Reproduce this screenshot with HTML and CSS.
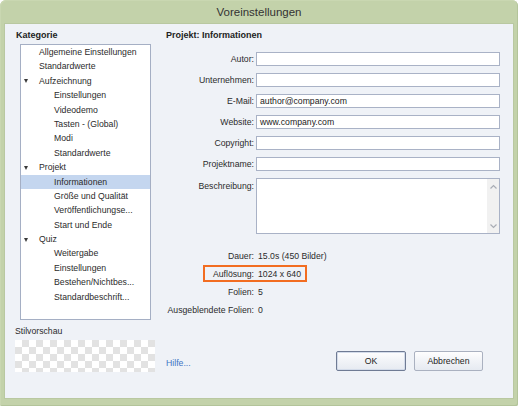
FILE: index.html
```html
<!DOCTYPE html>
<html lang="de">
<head>
<meta charset="utf-8">
<title>Voreinstellungen</title>
<link rel="stylesheet" href="styles.css">
</head>
<body>
<div class="window">
  <div class="titlebar">Voreinstellungen</div>
  <div class="client">
    <div class="left">
      <div class="heading">Kategorie</div>
      <ul class="tree">
        <li class="l1">Allgemeine Einstellungen</li>
        <li class="l1">Standardwerte</li>
        <li class="l1 open">Aufzeichnung</li>
        <li class="l2">Einstellungen</li>
        <li class="l2">Videodemo</li>
        <li class="l2">Tasten - (Global)</li>
        <li class="l2">Modi</li>
        <li class="l2">Standardwerte</li>
        <li class="l1 open">Projekt</li>
        <li class="l2 selected">Informationen</li>
        <li class="l2">Größe und Qualität</li>
        <li class="l2">Veröffentlichungse...</li>
        <li class="l2">Start und Ende</li>
        <li class="l1 open">Quiz</li>
        <li class="l2">Weitergabe</li>
        <li class="l2">Einstellungen</li>
        <li class="l2">Bestehen/Nichtbes...</li>
        <li class="l2">Standardbeschrift...</li>
      </ul>
      <div class="preview-label">Stilvorschau</div>
      <div class="checker"></div>
    </div>
    <div class="right">
      <div class="heading">Projekt: Informationen</div>
      <div class="form">
        <span class="label">Autor:</span><div class="field"></div>
        <span class="label">Unternehmen:</span><div class="field"></div>
        <span class="label">E-Mail:</span><div class="field">author@company.com</div>
        <span class="label">Website:</span><div class="field">www.company.com</div>
        <span class="label">Copyright:</span><div class="field"></div>
        <span class="label">Projektname:</span><div class="field"></div>
        <span class="label top">Beschreibung:</span>
        <div class="field area">
          <div class="scrollbar">
            <svg width="7" height="5" viewBox="0 0 7 5"><path d="M0.5 4.5 L3.5 1.5 L6.5 4.5" fill="none" stroke="#a9adb5" stroke-width="1.2"/></svg>
            <svg width="7" height="5" viewBox="0 0 7 5"><path d="M0.5 0.5 L3.5 3.5 L6.5 0.5" fill="none" stroke="#a9adb5" stroke-width="1.2"/></svg>
          </div>
        </div>
      </div>
      <div class="info">
        <div class="row"><span class="label">Dauer:</span><span>15.0s (450 Bilder)</span></div>
        <div class="row marked"><span class="label">Auflösung:</span><span>1024 x 640</span><span class="mark"></span></div>
        <div class="row"><span class="label">Folien:</span><span>5</span></div>
        <div class="row"><span class="label">Ausgeblendete Folien:</span><span>0</span></div>
      </div>
      <div class="footer">
        <a class="help" href="#">Hilfe...</a>
        <div class="buttons">
          <button class="btn default">OK</button>
          <button class="btn">Abbrechen</button>
        </div>
      </div>
    </div>
  </div>
</div>
</body>
</html>
```
FILE: styles.css
```css
html, body {
  margin: 0;
  padding: 0;
  background: #ffffff;
}
body {
  font-family: "Liberation Sans", Arial, sans-serif;
  font-size: 8.7px;
  color: #2b2b2b;
}
.window {
  box-sizing: border-box;
  width: 518px;
  height: 406px;
  padding: 0 5px 8px 5px;
  background: #c3d2aa;
  border-radius: 6px 6px 2px 2px;
  box-shadow: inset -1px -1px 0 #b3c49a, inset 1px 1px 0 #c9d7b1;
  display: flex;
  flex-direction: column;
}
.titlebar {
  height: 24px;
  line-height: 24px;
  text-align: center;
  font-size: 11.5px;
  color: #333333;
  flex: none;
}
.client {
  flex: 1;
  display: flex;
  background: #eff2f7;
  box-shadow: 0 0 0 1px #b9c8a1;
}
.left {
  width: 145px;
  padding: 5px 0 0 10px;
  flex: none;
}
.heading {
  font-weight: bold;
  font-size: 9px;
  line-height: 12px;
  height: 12px;
  color: #222;
}
.left .heading { padding-left: 1px; }
.tree {
  list-style: none;
  margin: 3px 0 0 5px;
  padding: 0;
  box-sizing: border-box;
  width: 131px;
  height: 276px;
  background: #ffffff;
  border: 1px solid #a5afc4;
}
.tree li {
  height: 14.4px;
  line-height: 14.4px;
  white-space: nowrap;
  position: relative;
}
.tree .l1 { padding-left: 18px; }
.tree .l2 { padding-left: 33px; }
.tree .open::before {
  content: "";
  position: absolute;
  left: 3px;
  top: 5.5px;
  border-left: 2.5px solid transparent;
  border-right: 2.5px solid transparent;
  border-top: 4px solid #3a3a3a;
}
.tree .selected {
  background: #c4d6ef;
}
.preview-label {
  margin-top: 5px;
  line-height: 12px;
  height: 12px;
}
.checker {
  margin-top: 3px;
  width: 140px;
  height: 32px;
  background-color: #ffffff;
  background-image: conic-gradient(#e2e2e2 25%, transparent 0 50%, #e2e2e2 0 75%, transparent 0);
  background-size: 14px 14px;
}
.right {
  flex: 1;
  display: flex;
  flex-direction: column;
  padding: 5px 13px 27px 6px;
}
.form {
  margin-top: 11px;
  display: grid;
  grid-template-columns: 88px 244px;
  grid-template-rows: repeat(6, 14px) 56px;
  column-gap: 2px;
  row-gap: 7px;
}
.label {
  text-align: right;
  align-self: center;
  line-height: 12px;
  white-space: nowrap;
}
.label.top {
  align-self: start;
  padding-top: 2px;
}
.field {
  box-sizing: border-box;
  background: #ffffff;
  border: 1px solid #a9b2c6;
  line-height: 12px;
  padding-left: 3px;
  color: #222;
}
.field.area {
  position: relative;
}
.scrollbar {
  position: absolute;
  right: 0;
  top: 0;
  bottom: 0;
  width: 12px;
  background: #f1f1f1;
  display: flex;
  flex-direction: column;
  justify-content: space-between;
  align-items: center;
  padding: 5px 0 4px;
  box-sizing: border-box;
}
.scrollbar svg { display: block; }
.info {
  margin-top: 16px;
  display: flex;
  flex-direction: column;
  gap: 6px;
}
.row {
  display: flex;
  gap: 4px;
  line-height: 12px;
  height: 12px;
  position: relative;
}
.row .label {
  width: 88px;
  flex: none;
}
.mark {
  position: absolute;
  left: 37px;
  top: -3.5px;
  width: 104px;
  height: 17px;
  box-sizing: border-box;
  border: 2px solid #f26d21;
}
.footer {
  margin-top: auto;
  display: flex;
  align-items: center;
  justify-content: space-between;
  height: 20px;
}
.help {
  color: #3f74c4;
  text-decoration: none;
  padding-top: 3px;
}
.buttons {
  display: flex;
  gap: 8px;
  margin-right: 17px;
}
.btn {
  font-family: inherit;
  font-size: 8.7px;
  color: #222;
  height: 20px;
  width: 69px;
  padding: 0;
  border: 1px solid #aab1c0;
  border-radius: 2px;
  background: linear-gradient(#fefefe, #f1f3f7 50%, #e6eaf1);
}
.btn.default {
  width: 70px;
  border-color: #6f7b94;
  box-shadow: inset 0 0 0 1px #d4dcea;
}
```
